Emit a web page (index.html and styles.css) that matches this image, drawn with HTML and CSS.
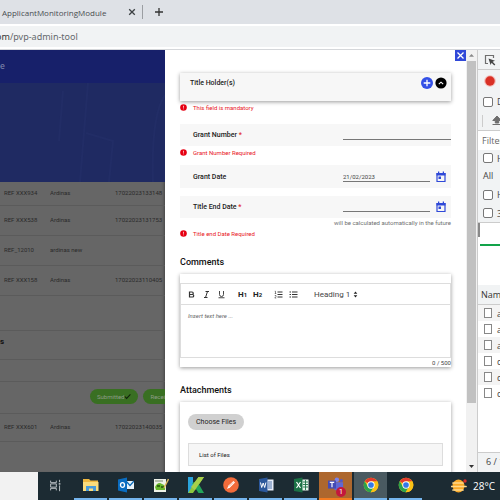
FILE: index.html
```html
<!DOCTYPE html>
<html lang="en">
<head>
<meta charset="utf-8">
<title>ApplicantMonitoringModule</title>
<link rel="stylesheet" href="styles.css">
</head>
<body>
<svg class="defs" aria-hidden="true">
  <symbol id="alert" viewBox="0 0 14 14"><circle cx="7" cy="7" r="6.6" fill="#e60012"/><path d="M7 3.500v4M7 9v1.600" stroke="#fff" stroke-width="1.400"/></symbol>
  <symbol id="calendar" viewBox="0 0 24 24"><path d="M4 5h16v16H4z" fill="none" stroke="#2f49d8" stroke-width="2.400"/><path d="M3 4h18v5H3zM6 1h2.500v4H6zM15.500 1H18v4h-2.500zM7 11h5v5H7z" fill="#2f49d8"/></symbol>
  <symbol id="chrome" viewBox="0 0 48 48"><circle cx="24" cy="24" r="22" fill="#fbc116"/><path d="M24 24 5 13a22 22 0 0 1 38 0z" fill="#e33b2e"/><path d="M5 13a22 22 0 0 0 18 33l10-17-9-5-9 5z" fill="#2ba24c"/><path d="M24 13h19a22 22 0 0 1-20 33l10-17z" fill="#fbc116"/><circle cx="24" cy="24" r="11" fill="#fff"/><circle cx="24" cy="24" r="8.500" fill="#3478e8"/></symbol>
</svg>

<header class="tabs">
  <span class="tab-title">ApplicantMonitoringModule</span>
  <button class="tab-close" aria-label="Close tab"><svg viewBox="0 0 8 8"><path d="M1.200 1.200 6.800 6.800M6.800 1.200 1.200 6.800" stroke="#3c4043" stroke-width="1.300"/></svg></button>
  <button class="tab-new" aria-label="New tab"><svg viewBox="0 0 10 10"><path d="M5 1v8M1 5h8" stroke="#333" stroke-width="1.300"/></svg></button>
</header>
<div class="address"><div class="url"><b>om</b>/pvp-admin-tool</div></div>

<main class="window">
  <section class="page">
    <div class="app-bar">e</div>
    <div class="hero"><svg viewBox="0 0 165 99" preserveAspectRatio="none"><path d="M88 0 80 99M86 50l27 8-4 41M165 12q-14 20-12 87M63 8l-4 50" fill="none" stroke="#2b3872" stroke-width="2" opacity=".25"/></svg></div>
    <table class="list">
      <tr class="h23"><td>REF XXX934</td><td>Ardinas</td><td>17022023133148</td></tr>
      <tr class="h30"><td>REF XXX538</td><td>Ardinas</td><td>17022023131753</td></tr>
      <tr class="h30"><td>REF_12010</td><td>ardinas new</td><td></td></tr>
      <tr class="h30"><td>REF XXX158</td><td>Ardinas</td><td>17022023110405</td></tr>
      <tr class="h35"><td colspan="3"></td></tr>
      <tr class="h29"><td class="group" colspan="3">s</td></tr>
      <tr class="h22"><td colspan="3"></td></tr>
      <tr class="h32"><td colspan="3"><div class="badges"><span class="badge">Submitted<svg viewBox="0 0 8 8"><path d="m1 4 2 2.200L7.300 1.500" fill="none" stroke="#10200a" stroke-width="1.200"/></svg></span><span class="badge">Received</span></div></td></tr>
      <tr class="h28"><td>REF XXX601</td><td>Ardinas</td><td>17022023140035</td></tr>
    </table>
  </section>

  <section class="drawer">
    <button class="close" aria-label="Close"><svg viewBox="0 0 11 11"><path d="m2.500 2.500 6 6m0-6-6 6" stroke="#fff" stroke-width="1.300"/></svg></button>
    <div class="holder">
      <span>Title Holder(s)</span>
      <button aria-label="Add"><svg viewBox="0 0 12 12"><circle cx="6" cy="6" r="6" fill="#3450e6"/><path d="M6 2.700v6.600M2.700 6h6.600" stroke="#fff" stroke-width="1.300"/></svg></button>
      <button aria-label="Collapse"><svg viewBox="0 0 12 12"><circle cx="6" cy="6" r="5.600" fill="#000"/><path d="m3.800 7.200 2.200-2 2.200 2" fill="none" stroke="#fff" stroke-width="1.100"/></svg></button>
    </div>
    <p class="error first"><svg><use href="#alert"/></svg>This field is mandatory</p>
    <div class="field">
      <label for="number">Grant Number <i>*</i></label><input id="number">
    </div>
    <p class="error spaced"><svg><use href="#alert"/></svg>Grant Number Required</p>
    <div class="field dated">
      <label for="date">Grant Date</label><input id="date" value="21/02/2023"><button aria-label="Pick grant date"><svg><use href="#calendar"/></svg></button>
    </div>
    <div class="field">
      <label for="end">Title End Date <i>*</i></label><input id="end"><button aria-label="Pick end date"><svg><use href="#calendar"/></svg></button>
    </div>
    <p class="hint">will be calculated automatically in the future</p>
    <p class="error"><svg><use href="#alert"/></svg>Title end Date Required</p>

    <h2>Comments</h2>
    <div class="card comments">
      <div class="tools">
        <button aria-label="Bold"><svg viewBox="0 0 18 18"><path d="M5 4h5a2.500 2.500 0 0 1 0 5H5zm0 5h6a2.500 2.500 0 0 1 0 5H5z" fill="none" stroke="#333" stroke-width="2.400"/></svg></button>
        <button aria-label="Italic"><svg viewBox="0 0 18 18"><path d="M7 3h7M4 15h7M11 3 7 15" stroke="#333" stroke-width="2"/></svg></button>
        <button class="gap" aria-label="Underline"><svg viewBox="0 0 18 18"><path d="M5 2v7a4 4 0 0 0 8 0V2M3 15.500h12" fill="none" stroke="#333" stroke-width="1.800"/></svg></button>
        <button class="head" aria-label="Heading 1">H<small>1</small></button>
        <button class="head gap" aria-label="Heading 2">H<small>2</small></button>
        <button aria-label="Ordered list"><svg viewBox="0 0 18 18"><path d="M7 4h10M7 9h10M7 14h10" stroke="#333" stroke-width="2"/><path d="M1.500 2.500h1.500V7M1.500 7h3M1.500 11h2.500v2l-2.500 3h3" fill="none" stroke="#333" stroke-width="1.200"/></svg></button>
        <button class="gap" aria-label="Bullet list"><svg viewBox="0 0 18 18"><path d="M6 4h11M6 9h11M6 14h11M1 4h3M1 9h3M1 14h3" stroke="#333" stroke-width="2"/></svg></button>
        <select aria-label="Text style"><option>Heading 1</option></select>
        <svg class="sort" viewBox="0 0 6 8"><path d="M.800 3.200 3 .500l2.200 2.700zM.800 4.800 3 7.500l2.200-2.700z" fill="#222"/></svg>
      </div>
      <textarea aria-label="Comments" placeholder="Insert text here ..."></textarea>
      <div class="count">0 / 500</div>
    </div>

    <h2>Attachments</h2>
    <div class="card files">
      <button class="choose">Choose Files</button>
      <div class="file-list">List of Files</div>
    </div>
  </section>

  <div class="scroll" aria-hidden="true">
    <svg viewBox="0 0 11 11"><path d="M3 6.800h5L5.500 4z" fill="#888"/></svg>
    <div class="thumb"></div>
    <svg viewBox="0 0 11 11"><path d="M3 4h5L5.500 7z" fill="#333"/></svg>
  </div>

  <aside class="devtools">
    <div class="bar h20"><svg class="pick" viewBox="0 0 12 12"><path d="M4 9.500H1.500v-8h8V4" fill="none" stroke="#6e6e6e" stroke-width="1.200"/><path d="m4.500 4.500 6.500 2.300-2.400 1 2.700 2.700-1 1-2.700-2.700-1 2.200z" fill="#444"/></svg></div>
    <div class="bar h22"><svg class="rec" viewBox="0 0 12 12"><circle cx="6" cy="6" r="5.800" fill="#f3bab6"/><circle cx="6" cy="6" r="4.700" fill="#d93025"/></svg></div>
    <label class="check"><input type="checkbox">Disable cache</label>
    <div class="bar h20 import"><svg viewBox="0 0 10 10"><path d="M5 0 .800 4.500h2.500V7h3.400V4.500h2.500zM.500 8.500h9" fill="#6e6e6e" stroke="#6e6e6e"/></svg></div>
    <input class="filter" aria-label="Filter" placeholder="Filter">
    <label class="check h16"><input type="checkbox">Hide data URLs</label>
    <div class="bar all">All</div>
    <label class="check"><input type="checkbox">Has blocked cookies</label>
    <label class="check last"><input type="checkbox">3rd-party requests</label>
    <div class="timeline"><div class="mark"></div><div class="line"></div></div>
    <div class="name">Name</div>
    <ul>
      <li><i></i>a</li><li><i></i>a</li><li><i></i>a</li><li><i></i>c</li><li><i></i>c</li><li><i></i>c</li>
    </ul>
    <div class="status">6 / 12</div>
  </aside>
</main>

<footer class="taskbar">
  <div class="search"></div>
  <button class="app idle" aria-label="Task view"><svg viewBox="0 0 16 16"><path d="M2 2v2.500h7V2M2 14v-2.500h7V14M2 6h7v4H2zM13 1v3M13 8v7" fill="none" stroke="#b9c0c4" stroke-width="1.200"/><path d="M12 5h2v2h-2z" fill="#b9c0c4"/></svg></button>
  <button class="app" aria-label="File Explorer"><svg viewBox="0 0 16 16"><path d="M0 2h6l1.500 1.500H15V14H0z" fill="#f0b840"/><path d="M0 5h15.500v9H0z" fill="#fbdc7c"/><path d="M3 14V9h10v5h-3v-2.500H6V14z" fill="#4a9bd8"/></svg></button>
  <button class="app" aria-label="Outlook"><svg viewBox="0 0 16 16"><path d="M8 4h8v8H8z" fill="#e8f2fa"/><path d="m8 4 4 4.500L16 4" fill="none" stroke="#0a6ab8" stroke-width="1.200"/><path d="m0 2.500 9-2v15l-9-2z" fill="#0a6cc0"/><ellipse cx="4.500" cy="8" rx="2" ry="2.400" fill="none" stroke="#fff" stroke-width="1.300"/></svg></button>
  <button class="app" aria-label="Notepad++"><svg viewBox="0 0 16 16"><path d="M1 2h12v13H1z" fill="#eef2e8"/><path d="M2 4h8" stroke="#7a8b70"/><path d="M2 10q3-6 7-3 4 1 3 6H3z" fill="#68b72c"/><path d="M4 9h3M8 10h3" stroke="#25510d" stroke-width="1.500"/><path d="m15.500 2-4.500 9" stroke="#d7b45c" stroke-width="1.500"/></svg></button>
  <button class="app" aria-label="Kayako"><svg viewBox="0 0 16 16"><path d="M0 0h5v16H0z" fill="#2aa4dd"/><path d="M10.500 0H16L5 16H0z" fill="#8cc63f"/><path d="M4 6 9 4l7 12h-5.500z" fill="#23a55a"/><path d="M10.500 0H16L7 13 3 10z" fill="#a7d04a"/></svg></button>
  <button class="app" aria-label="Postman"><svg viewBox="0 0 16 16"><circle cx="8" cy="8" r="7.800" fill="#f26b3a"/><path d="m4 12 1.500-3.500L10.500 4l1.500 1.500-5 5z" fill="#fff"/><path d="m6 9.500 4-4" stroke="#f26b3a" stroke-width=".600"/></svg></button>
  <button class="app" aria-label="Word"><svg viewBox="0 0 16 16"><path d="M8 2.500h7.500v11H8z" fill="#e8eefa"/><path d="M10 5h4M10 7h4M10 9h4M10 11h4" stroke="#2b5797" stroke-width=".800"/><path d="m1 2 8.500-1.500v15L1 14z" fill="#2b579a"/><path d="m2.500 5.500 1.200 5L5.200 6l1.500 4.500 1.200-5" fill="none" stroke="#fff"/></svg></button>
  <button class="app" aria-label="Excel"><svg viewBox="0 0 16 16"><path d="M8 2.500h7.500v11H8z" fill="#e5f4ea"/><path d="M10 5h5M10 7.500h5M10 10h5M12.500 3v10" stroke="#1b7145" stroke-width=".900"/><path d="m1 2 8.500-1.500v15L1 14z" fill="#1b7145"/><path d="m3.500 5 4 6M7.500 5l-4 6" stroke="#fff" stroke-width="1.200"/></svg></button>
  <button class="app alerting" aria-label="Teams"><svg viewBox="0 0 18 18"><circle cx="10" cy="3" r="2.500" fill="#7b83eb"/><circle cx="15" cy="4" r="1.800" fill="#5059c9"/><path d="M7 6h10v6q-4 6-10 2z" fill="#6068d4"/><path d="M0 4h9v9H0z" fill="#444bb5"/><path d="M2 6h5M4.500 6v5.500" stroke="#fff" stroke-width="1.300"/></svg><span class="count-badge">1</span></button>
  <button class="app active" aria-label="Chrome"><svg><use href="#chrome"/></svg></button>
  <button class="app" aria-label="Chrome profile"><svg><use href="#chrome"/></svg></button>
  <div class="weather"><svg viewBox="0 0 16 14"><ellipse cx="7.500" cy="7" rx="6" ry="6.500" fill="#f9a928"/><path d="M2 4h10M0 7.500h15M2 11h10" stroke="#ffd98a" stroke-width="1.700" stroke-linecap="round"/><circle cx="14" cy="2" r="1.700" fill="#d92c27"/></svg>28°C</div>
</footer>
</body>
</html>
```
FILE: styles.css
```css
* { box-sizing: border-box; }
body {
  margin: 0;
  height: 100vh;
  display: flex;
  flex-direction: column;
  overflow: hidden;
  background: #fff;
  color: #222;
  font-family: Roboto, "Liberation Sans", sans-serif;
  font-size: 7px;
}
button {
  border: 0;
  padding: 0;
  background: none;
  color: inherit;
  font: inherit;
}
button svg { display: block; }
input, textarea, select { font-family: inherit; }
p, h2, ul { margin: 0; padding: 0; }
.defs { position: absolute; width: 0; height: 0; }

.tabs {
  flex: none;
  display: flex;
  align-items: center;
  height: 24px;
  padding-left: 2px;
  background: #dee1e6;
  color: #4a4d51;
  font-family: "Open Sans", sans-serif;
  font-size: 8px;
}
.tab-title { width: 126px; }
.tab-close { width: 15px; padding-right: 7px; border-right: 1px solid #9b9ea2; height: 14px; }
.tab-close svg { width: 8px; height: 8px; }
.tab-new { margin-left: 11px; }
.tab-new svg { width: 10px; height: 10px; }
.address { flex: none; height: 26px; padding: 2px 0 3px; border-bottom: 1px solid #d5d7da; background: #fff; }
.url {
  height: 21px;
  overflow: hidden;
  background: #f1f3f4;
  color: #64686c;
  font-family: "Noto Sans", sans-serif;
  font-size: 9px;
  line-height: 21px;
  text-indent: -4px;
}
.url b { color: #333; font-weight: 400; }

.window {
  flex: 1;
  min-height: 0;
  display: grid;
  grid-template-columns: 33% 1fr 11px 23px;
  overflow: hidden;
}
.window > * { min-width: 0; min-height: 0; overflow: hidden; }

.page { background: #666; color: #2a2a2a; box-shadow: inset -3px 0 3px -2px #444; }
.app-bar { height: 33px; background: #17206a; color: #8389ac; font-size: 9px; line-height: 33px; }
.hero { height: 99px; background: #1f2a62; }
.hero svg { display: block; width: 100%; height: 100%; }
.list { width: 100%; border-collapse: collapse; table-layout: fixed; font-size: 6px; }
.list td { padding: 0 0 2px; border-bottom: 1px solid #5b5b5b; white-space: nowrap; overflow: hidden; }
.list td:first-child { width: 50px; padding-left: 4px; }
.list td:nth-child(2) { width: 65px; }
.list td.group { padding: 0 0 6px; font-size: 8px; font-weight: 700; color: #111; }
.h23 { height: 23px; }
.h30 { height: 30px; }
.h35 { height: 35px; }
.h29 { height: 29px; }
.h32 { height: 32px; }
.h28 { height: 28px; }
.h22 { height: 22px; }
.badges { display: flex; gap: 5px; padding-left: 86px; }
.badge {
  flex: none;
  display: flex;
  align-items: center;
  height: 15px;
  padding: 0 7px;
  border-radius: 8px;
  background: #396f22;
  color: #8e9c88;
}
.badge svg { width: 7px; height: 7px; }

.drawer { position: relative; padding: 23px 15px 0; background: #fff; }
.close { position: absolute; top: 0; right: 0; width: 11px; height: 11px; background: #3048d8; }
.holder {
  display: flex;
  align-items: flex-start;
  gap: 2px;
  height: 28px;
  padding: 4px 4px 0 10px;
  background: #f7f7f7;
  box-shadow: 0 1px 4px #0006;
  font-weight: 500;
}
.holder span { flex: 1; line-height: 12px; }
.holder svg { width: 12px; height: 12px; }
.error { display: flex; align-items: center; gap: 6px; height: 12px; color: #e8141c; font-size: 6px; }
.error svg { width: 7px; height: 7px; }
.error.first { margin-bottom: 11px; }
.error.spaced { margin-bottom: 7px; }
.field {
  display: grid;
  grid-template-columns: 150px 1fr 21px;
  height: 22px;
  padding-left: 13px;
  align-items: center;
  background: #f7f7f7;
}
.field.dated { height: 23px; margin-bottom: 8px; }
.field label { font-weight: 500; }
.field i { color: #e2262c; font-style: normal; }
.field input {
  width: 100%;
  height: 10px;
  padding: 0;
  border: 0;
  border-bottom: 1px solid #777;
  background: none;
  color: #444;
  font-size: 6px;
}
.field input:last-child { grid-column: 2 / 4; }
.field button { justify-self: center; }
.field button svg { width: 12px; height: 12px; }
.hint { height: 9px; color: #707070; font-size: 6px; line-height: 10px; text-align: right; white-space: nowrap; }
h2 { margin: 18px 0 7px; font-size: 9px; font-weight: 500; line-height: 10px; color: #111; }
.card { background: #fff; box-shadow: 0 1px 4px #0006; }
.comments { padding-top: 9px; }
.tools { display: flex; align-items: center; height: 22px; padding-left: 6px; border: 1px solid #ddd; }
.tools button { width: 14px; margin-right: 1px; }
.tools button svg { width: 9px; height: 9px; }
.tools .gap { margin-right: 7px; }
.tools .head { text-align: left; font-size: 8px; font-weight: 700; }
.tools small { font-size: 6px; }
.tools select { appearance: none; border: 0; padding: 0; background: none; width: 39px; margin-left: 4px; color: #444; font-size: 8px; }
.sort { width: 5px; height: 7px; }
textarea {
  display: block;
  width: 100%;
  height: 53px;
  padding: 7px;
  border: 1px solid #ddd;
  border-top: 0;
  resize: none;
  font-size: 6px;
}
textarea::placeholder { color: #666; font-style: italic; }
.count { height: 9px; text-align: right; font-size: 6px; line-height: 10px; color: #444; }
.files { height: 90px; padding: 12px 8px; }
.choose { display: block; height: 16px; padding: 0 8px; border-radius: 8px; background: #d0d0d0; }
.file-list { height: 23px; margin-top: 13px; padding-left: 10px; border: 1px solid #ddd; background: #f6f6f6; font-size: 6px; line-height: 21px; }

.scroll { display: flex; flex-direction: column; background: #f1f1f1; }
.scroll svg { flex: none; width: 11px; height: 11px; }
.thumb { height: 81%; margin: 0 1px; background: #c1c1c1; }
.scroll svg:last-child { margin-top: auto; }

.devtools {
  display: flex;
  flex-direction: column;
  border-left: 1px solid #ccc;
  background: #f1f3f4;
  color: #444;
  font-family: "Open Sans", sans-serif;
  font-size: 9px;
  white-space: nowrap;
}
.devtools > * { flex: none; }
.bar { display: flex; align-items: center; padding-left: 6px; }
.h20 { height: 20px; border-bottom: 1px solid #ccc; }
.h20.import { padding-left: 13px; }
.devtools .pick { width: 12px; height: 12px; }
.devtools .rec { flex: none; width: 12px; height: 12px; }
.import::before { content: ""; flex: none; width: 1px; height: 12px; margin: 0 9px 0 -9px; background: #ccc; }
.import svg { flex: none; width: 10px; height: 10px; }
.check { display: flex; align-items: center; gap: 4px; height: 19px; padding-left: 5px; overflow: hidden; }
.check input { appearance: none; flex: none; width: 10px; height: 10px; margin: 0; border: 1px solid #777; border-radius: 2px; background: #fff; }
.filter { width: 100%; height: 19px; padding: 0 0 0 4px; border: 0; background: #fff; font-size: 9px; }
.filter::placeholder { color: #666; }
.check.h16 { height: 16px; }
.bar.all { height: 19px; padding-left: 5px; }
.check.last { border-bottom: 1px solid #ccc; }
.timeline { height: 62px; background: #fff; }
.mark { width: 2px; height: 14px; background: #888; }
.line { height: 2px; margin: 7px 0 0 2px; background: #12a34a; }
.name { height: 20px; padding-left: 3px; border-bottom: 1px solid #ccc; line-height: 20px; color: #333; }
.devtools ul { flex: 1; background: #fff; list-style: none; }
.devtools li { display: flex; align-items: center; gap: 5px; height: 16px; padding-left: 6px; }
.devtools li:nth-child(odd) { background: #f4f4f4; }
.devtools li i { flex: none; width: 8px; height: 10px; border: 1px solid #888; background: #fff; }
.status { height: 20px; padding-left: 8px; border-top: 1px solid #ccc; line-height: 18px; }

.taskbar { flex: none; display: flex; height: 28px; background: #1c2b33; color: #fff; }
.search { width: 38px; background: #f2f2f2; }
.app { position: relative; display: grid; place-items: center; width: 33px; margin: 0 1px; border-bottom: 2px solid #75b5ee; }
.app.idle { border-color: transparent; }
.app svg { width: 16px; height: 16px; }
.app.idle svg { width: 13px; height: 13px; }
.app.alerting { background: #ad672e; border-color: #f47b20; }
.app.active { background: #4a5a61; }
.count-badge { position: absolute; right: 6px; bottom: 1px; width: 10px; height: 10px; border-radius: 50%; background: #c4183c; color: #fff; font-size: 7px; line-height: 10px; }
.weather { display: flex; align-items: center; gap: 6px; margin: 0 5px 0 auto; font-family: "Open Sans", sans-serif; font-size: 10px; }
.weather svg { width: 16px; height: 14px; }
```
